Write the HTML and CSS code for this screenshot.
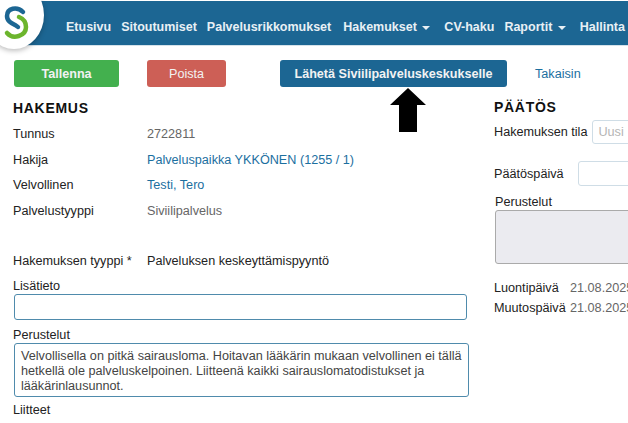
FILE: index.html
```html
<!DOCTYPE html>
<html>
<head>
  <meta charset="utf-8">
  <link rel="stylesheet" href="styles.css">
</head>
<body>
  <div class="logo">
    <svg width="34" height="46" viewBox="0 0 34 46">
      <path d="M23 12 C17 6 7 8 7 16 C7 21 11 23 15 25 L18 27" fill="none" stroke="#1c6693" stroke-width="4.5" stroke-linecap="round"/>
      <path d="M19 17 C24 19 26 23 26 27 C26 36 13 40 7 33" fill="none" stroke="#6cb52d" stroke-width="4.5" stroke-linecap="round"/>
    </svg>
  </div>

  <div class="header">
    <a class="nav-item nav-etusivu">Etusivu</a>
    <a class="nav-item">Sitoutumiset</a>
    <a class="nav-item nav-wide">Palvelusrikkomukset</a>
    <a class="nav-item nav-menu">Hakemukset <span class="caret"></span></a>
    <a class="nav-item">CV-haku</a>
    <a class="nav-item nav-menu">Raportit <span class="caret"></span></a>
    <a class="nav-item">Hallinta</a>
  </div>

  <div class="toolbar">
    <button class="btn btn-save">Tallenna</button>
    <button class="btn btn-delete">Poista</button>
    <button class="btn btn-send">Lähetä Siviilipalveluskeskukselle</button>
    <a class="back-link">Takaisin</a>
  </div>

  <svg class="arrow" width="38" height="46" viewBox="0 0 38 46">
    <polygon points="19,1 37,18 28,18 28,45 10,45 10,18 1,18" fill="#000"/>
  </svg>

  <div class="columns">
    <div class="col-left">
      <h2>HAKEMUS</h2>
      <div class="row"><span class="row-label">Tunnus</span><span class="row-value">2722811</span></div>
      <div class="row"><span class="row-label">Hakija</span><a class="row-link">Palveluspaikka YKKÖNEN (1255 / 1)</a></div>
      <div class="row"><span class="row-label">Velvollinen</span><a class="row-link">Testi, Tero</a></div>
      <div class="row"><span class="row-label">Palvelustyyppi</span><span class="row-value">Siviilipalvelus</span></div>
      <div class="row row-type"><span class="row-label">Hakemuksen tyyppi *</span><span class="row-dark">Palveluksen keskeyttämispyyntö</span></div>
      <label class="field-label">Lisätieto</label>
      <div class="input-box"></div>
      <label class="field-label label-reason">Perustelut</label>
      <div class="text-box">Velvollisella on pitkä sairausloma. Hoitavan lääkärin mukaan velvollinen ei tällä hetkellä ole palveluskelpoinen. Liitteenä kaikki sairauslomatodistukset ja lääkärinlausunnot.</div>
      <label class="field-label label-attach">Liitteet</label>
    </div>

    <div class="col-right">
      <h2 class="h-decision">PÄÄTÖS</h2>
      <div class="decision-row">
        <span class="row-dark">Hakemuksen tila</span>
        <div class="small-input">Uusi</div>
      </div>
      <div class="decision-row date-row">
        <span class="row-dark">Päätöspäivä</span>
        <div class="small-input date-input"></div>
      </div>
      <label class="field-label decision-label">Perustelut</label>
      <div class="disabled-box"></div>
      <div class="meta-row meta-first"><span class="meta-label">Luontipäivä</span><span class="meta-value">21.08.2025</span></div>
      <div class="meta-row"><span class="meta-label">Muutospäivä</span><span class="meta-value">21.08.2025</span></div>
    </div>
  </div>
</body>
</html>
```

FILE: styles.css
```css
html, body {
  margin: 0;
  padding: 0;
}

body {
  width: 628px;
  height: 423px;
  overflow: hidden;
  position: relative;
  background: white;
  font-family: "Liberation Sans", Arial, sans-serif;
  font-size: 12.65px;
  color: #222;
}

.logo {
  position: absolute;
  left: -16px;
  top: -19px;
  width: 60px;
  height: 68px;
  background: white;
  border-radius: 50%;
  box-shadow: 0 2px 5px rgba(0, 0, 0, 0.25);
  z-index: 2;
}

.logo svg {
  position: absolute;
  left: 16px;
  top: 19px;
}

.header {
  display: flex;
  align-items: center;
  height: 45px;
  margin: 1px 0 0 4px;
  padding-top: 8px;
  box-sizing: border-box;
  background: #1c6693;
  border-bottom: 1px solid #d5e2ea;
}

.nav-item {
  color: #e8f0f5;
  font-weight: bold;
  font-size: 12.5px;
  white-space: nowrap;
  margin-right: 10px;
}

.nav-etusivu {
  margin-left: 62px;
}

.nav-wide {
  margin-right: 12px;
}

.nav-menu {
  margin-right: 14px;
}

.caret {
  display: inline-block;
  width: 0;
  height: 0;
  margin-left: 2px;
  vertical-align: middle;
  border-left: 4px solid transparent;
  border-right: 4px solid transparent;
  border-top: 4px solid #e8f0f5;
}

.toolbar {
  display: flex;
  align-items: center;
  margin: 14px 0 0 14px;
}

.btn {
  height: 27px;
  border: none;
  border-radius: 3px;
  color: #f2f2f2;
  font-family: inherit;
  font-size: 12.6px;
  font-weight: bold;
  padding: 0;
}

.btn-save {
  width: 105px;
  background: #43b04e;
  margin-right: 28px;
}

.btn-delete {
  width: 79px;
  background: #cd5f56;
  font-weight: normal;
  margin-right: 54px;
}

.btn-send {
  width: 227px;
  background: #1c6693;
  margin-right: 28px;
}

.back-link {
  color: #1c6f9f;
}

.arrow {
  position: absolute;
  left: 389px;
  top: 87px;
}

.columns {
  display: flex;
}

.col-left {
  width: 494px;
  flex-shrink: 0;
  padding-left: 13px;
  box-sizing: border-box;
}

.col-right {
  width: 134px;
  flex-shrink: 0;
  white-space: nowrap;
}

h2 {
  margin: 13px 0 10px;
  font-size: 14px;
  line-height: 16px;
  letter-spacing: 0.7px;
  color: #111;
}

.row {
  display: flex;
  height: 25.5px;
  line-height: 16px;
}

.row-label {
  width: 134px;
  flex-shrink: 0;
  color: #222;
}

.row-value {
  color: #666;
}

.row-link {
  color: #1c6f9f;
}

.row-dark {
  color: #222;
}

.row-type {
  margin-top: 25px;
}

.field-label {
  display: block;
  line-height: 14px;
  color: #222;
}

.input-box {
  width: 453px;
  height: 26px;
  margin: 1px 0 0 1px;
  box-sizing: border-box;
  border: 1.5px solid #4f8bac;
  border-radius: 3px;
}

.label-reason {
  margin-top: 8px;
}

.text-box {
  width: 455px;
  height: 54px;
  margin: 1px 0 0 1px;
  padding: 5px 6px;
  box-sizing: border-box;
  border: 1.5px solid #4f8bac;
  border-radius: 3px;
  line-height: 15px;
  color: #444;
}

.label-attach {
  margin-top: 6px;
}

.h-decision {
  margin: 12px 0 0;
}

.decision-row {
  display: flex;
  align-items: center;
  height: 24px;
  margin-top: 5px;
}

.small-input {
  flex-shrink: 0;
  margin-left: 5px;
  width: 80px;
  height: 24px;
  line-height: 22px;
  padding-left: 5px;
  box-sizing: border-box;
  border: 1px solid #cfdde6;
  border-radius: 3px;
  color: #b5b5b5;
}

.date-row {
  height: 25px;
  margin-top: 17px;
}

.date-input {
  margin-left: 14px;
  height: 25px;
}

.decision-label {
  margin: 9px 0 0 1px;
}

.disabled-box {
  width: 160px;
  height: 54px;
  margin: 1px 0 0 1px;
  box-sizing: border-box;
  background: #ebebf0;
  border: 1px solid #aaa;
  border-radius: 3px;
}

.meta-row {
  display: flex;
  line-height: 14px;
  margin-top: 6px;
}

.meta-first {
  margin-top: 17px;
}

.meta-label {
  width: 76px;
  flex-shrink: 0;
}

.meta-value {
  flex-shrink: 0;
  color: #666;
}
```
